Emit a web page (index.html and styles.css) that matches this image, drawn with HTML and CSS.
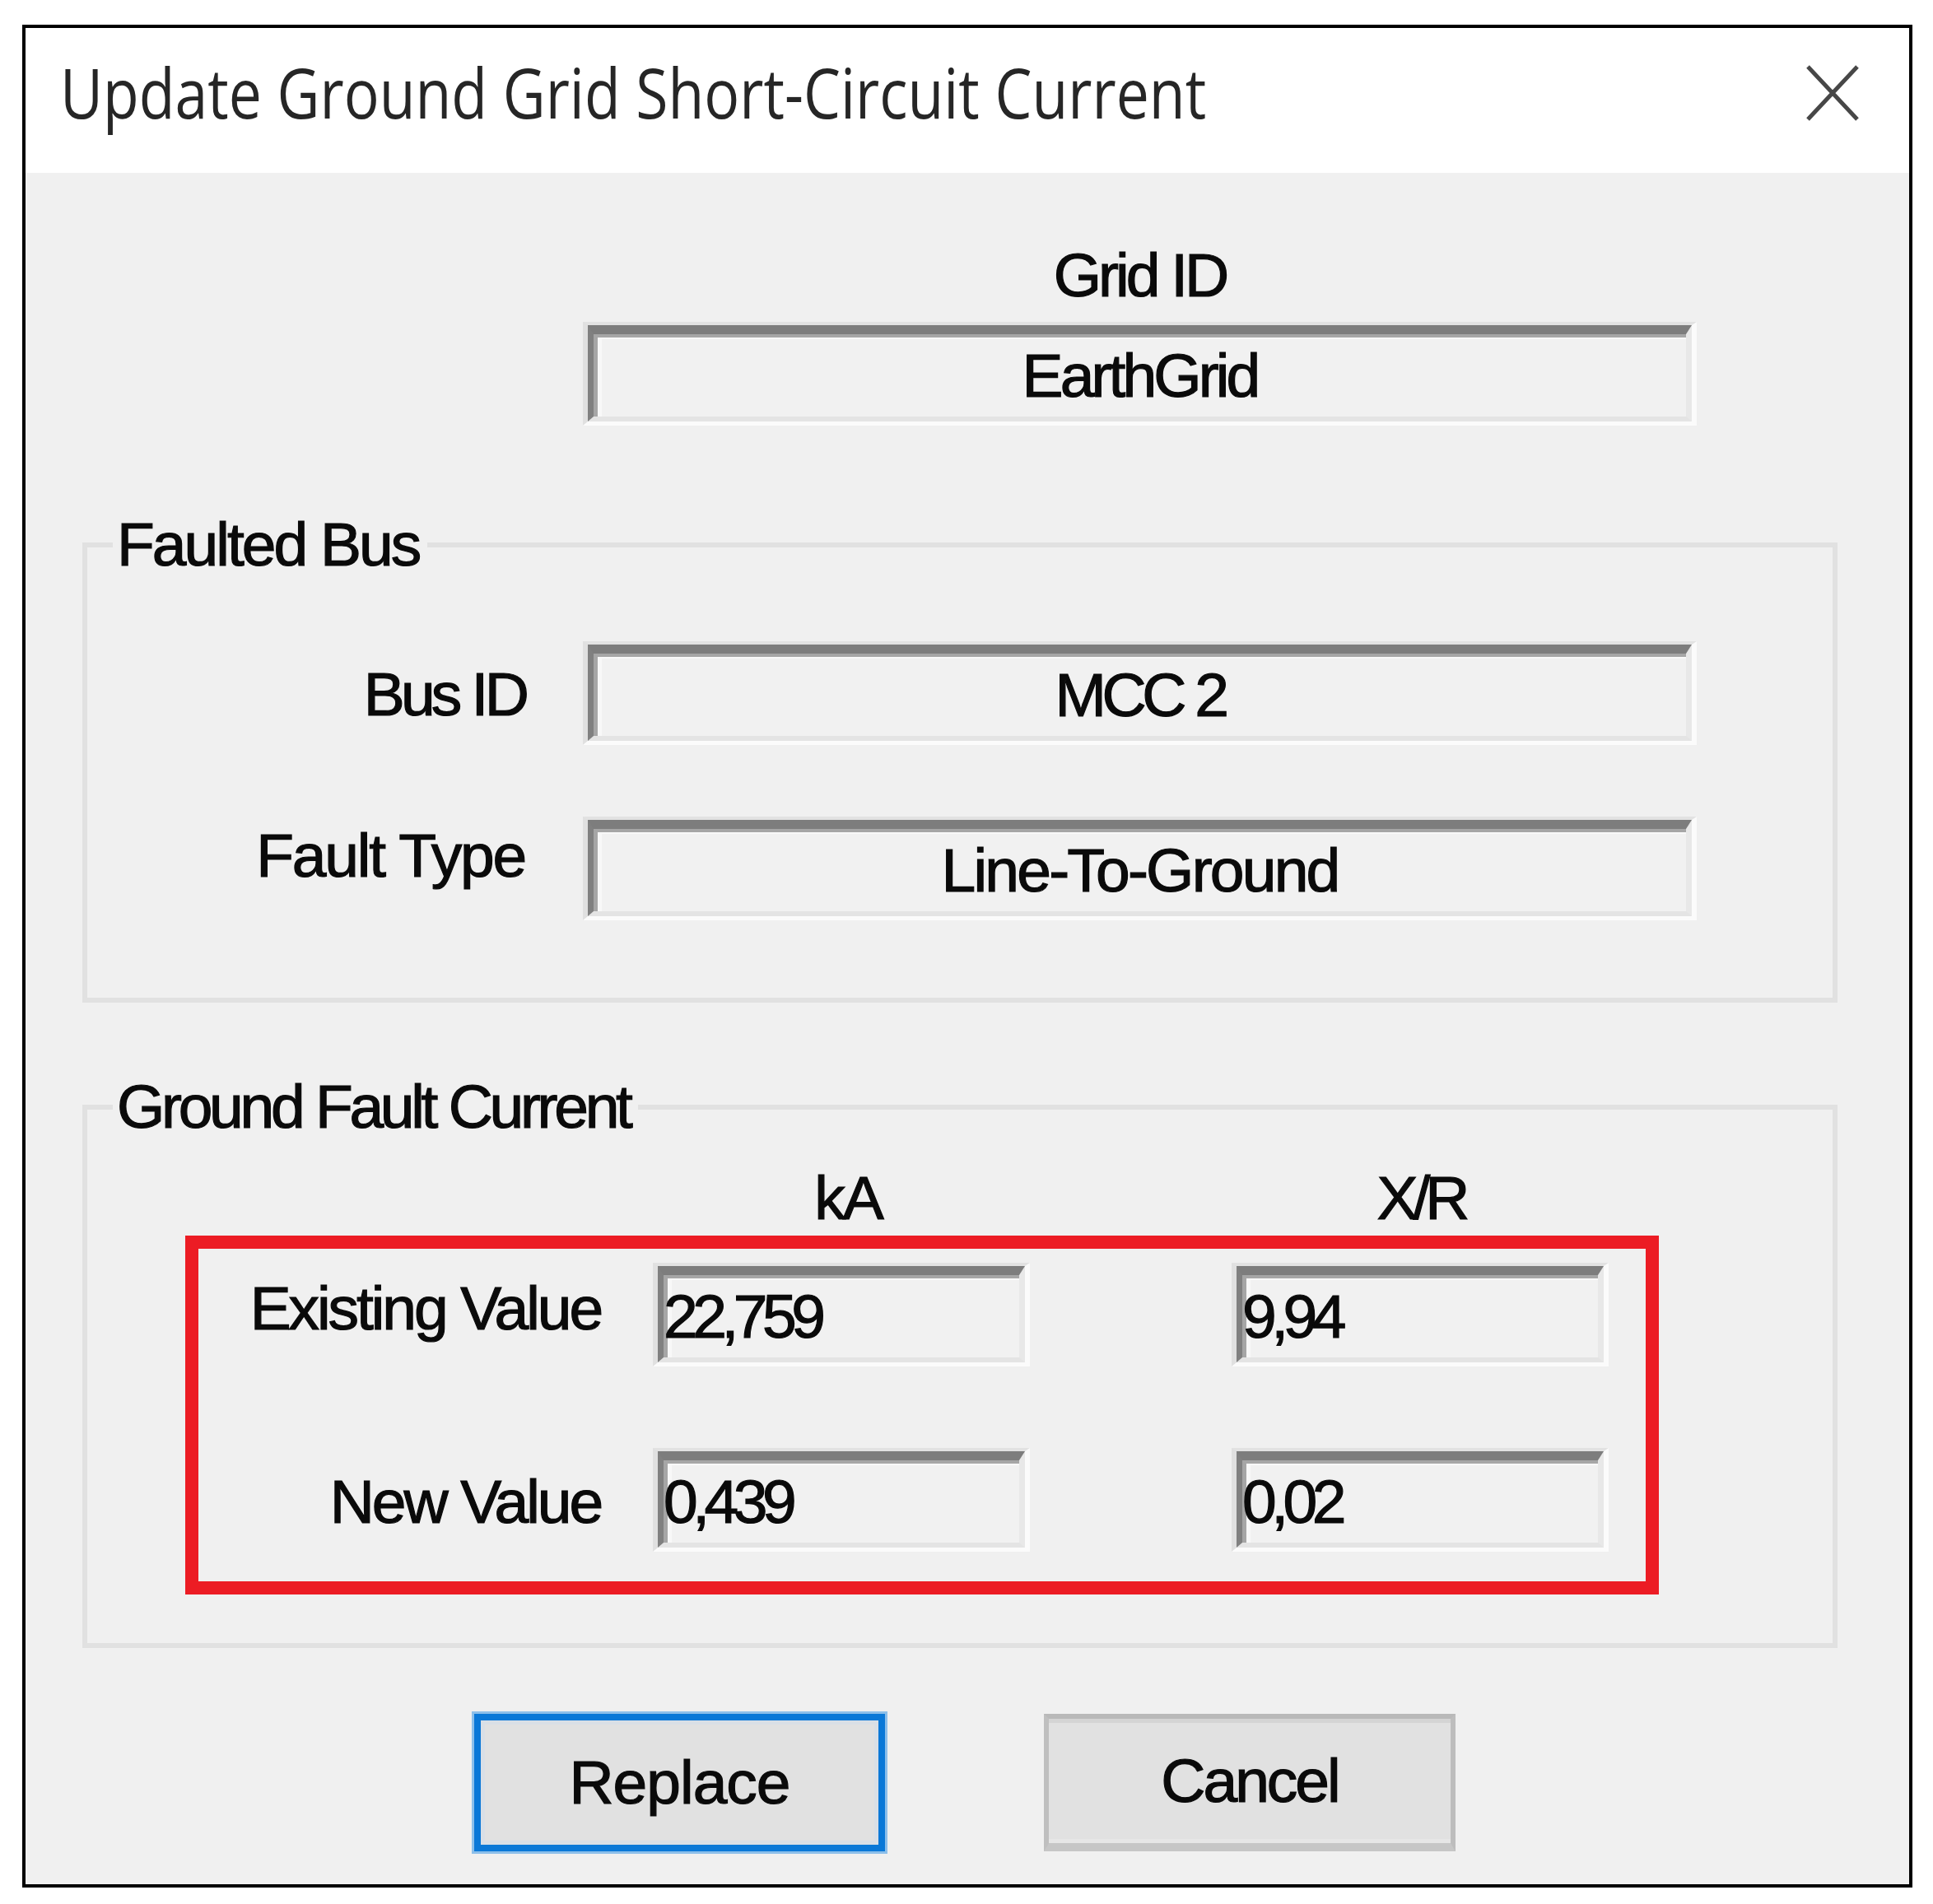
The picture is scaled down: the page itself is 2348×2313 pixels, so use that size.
FILE: index.html
```html
<!DOCTYPE html>
<html lang="en">
<head>
<meta charset="utf-8">
<title>Update Ground Grid Short-Circuit Current</title>
<link rel="stylesheet" href="styles.css">
</head>
<body>
<div class="dialog">
  <div class="titlebar">
    <span class="title">Update Ground Grid Short-Circuit Current</span>
    <svg class="close" width="64" height="68" viewBox="0 0 64 68" aria-label="Close">
      <path d="M2 2 L62 66 M62 2 L2 66" stroke="#474747" stroke-width="5" fill="none"/>
    </svg>
  </div>
  <div class="content">
    <div class="grid-label">Grid ID</div>
    <div class="field grid-field"><div class="field-in"><span class="t-earth">EarthGrid</span></div></div>

    <fieldset class="group group-bus">
      <legend class="lg-bus">Faulted Bus</legend>
      <div class="row row-bus">
        <div class="label label-bus">Bus ID</div>
        <div class="field wide"><div class="field-in"><span class="t-mcc">MCC 2</span></div></div>
      </div>
      <div class="row row-fault">
        <div class="label label-fault">Fault Type</div>
        <div class="field wide"><div class="field-in"><span class="t-ltg">Line-To-Ground</span></div></div>
      </div>
    </fieldset>

    <fieldset class="group group-gfc">
      <legend class="lg-gfc">Ground Fault Current</legend>
      <div class="hdr">
        <div class="hcell h-ka">kA</div>
        <div class="hcell h-xr">X/R</div>
      </div>
      <div class="mark">
        <div class="row row-exist">
          <div class="label vlabel vl-exist">Existing Value</div>
          <div class="field num num-ka"><div class="field-in">22,759</div></div>
          <div class="field num num-xr"><div class="field-in">9,94</div></div>
        </div>
        <div class="row row-new">
          <div class="label vlabel vl-new">New Value</div>
          <div class="field num num-ka"><div class="field-in">0,439</div></div>
          <div class="field num num-xr"><div class="field-in">0,02</div></div>
        </div>
      </div>
    </fieldset>

    <div class="buttons">
      <div class="btn btn-default">Replace</div>
      <div class="btn btn-cancel">Cancel</div>
    </div>
  </div>
</div>
</body>
</html>
```
FILE: styles.css
```css
* { box-sizing: border-box; }

body {
  margin: 0;
  background: #ffffff;
  font-family: "Liberation Sans", Arial, sans-serif;
  font-size: 75px;
  line-height: 75px;
  color: #0a0a0a;
}

.dialog {
  margin: 30px 0 0 27px;
  width: 2296px;
  height: 2263px;
  border: 4px solid #000000;
  background: #f0f0f0;
}

.titlebar {
  height: 176px;
  background: #ffffff;
  display: flex;
  justify-content: space-between;
  align-items: flex-start;
}

.title {
  display: inline-block;
  margin: 36px 0 0 42px;
  font-family: "Open Sans", sans-serif;
  font-size: 84px;
  font-weight: 400;
  line-height: 84px;
  color: #262626;
  white-space: nowrap;
  transform: scaleX(0.851);
  transform-origin: 0 50%;
}

.close {
  flex: none;
  margin: 45px 61px 0 0;
}

.content {
  padding-top: 87px;
  -webkit-text-stroke: 1.2px #0a0a0a;
}

.grid-label {
  margin-left: 677px;
  width: 1353px;
  height: 75px;
  text-align: center;
  letter-spacing: -4px;
}

/* sunken edit field */
.field {
  height: 126px;
  border-style: solid;
  border-width: 4px 6px 5px 6px;
  border-color: #e2e2e2 #fbfbfb #fbfbfb #e0e0e0;
  background: #f1f1f1;
  flex: none;
}

.field-in {
  height: 100%;
  border-style: solid;
  border-width: 11px 7px 6px 7px;
  border-color: #7d7d7d #e8e8e8 #e4e4e4 #808080;
  box-shadow: inset 5px 4px 0 #a6a6a6, inset 10px 6px 0 #f8f8f8;
  display: flex;
  align-items: center;
  justify-content: center;
  white-space: nowrap;
}

.grid-field {
  margin: 19px 0 0 677px;
  width: 1353px;
}

.t-earth { letter-spacing: -3.9px; }
.t-mcc { letter-spacing: -5.5px; }
.t-ltg { letter-spacing: -2.8px; }

/* group boxes */
.group {
  margin: 0 0 0 69px;
  width: 2132px;
  min-width: 0;
  border: 6px solid #e1e1e1;
  padding: 0;
}

.group legend {
  margin-left: 31px;
  padding: 0 10px 0 5px;
  line-height: 75px;
  white-space: nowrap;
}

.lg-bus { letter-spacing: -3px; }
.lg-gfc { letter-spacing: -4.3px; }

.group-bus {
  margin-top: 107px;
  padding: 80px 0 94px 0;
}

.group-gfc {
  margin-top: 89px;
  padding: 0 0 59px 0;
}

.row {
  display: flex;
  align-items: flex-start;
}

.label {
  flex: none;
  text-align: right;
  white-space: nowrap;
}

.label-bus,
.label-fault {
  width: 532px;
}

.label-bus { margin-top: 27px; letter-spacing: -4.8px; }
.label-fault { margin-top: 10px; letter-spacing: -2.2px; }

.field.wide {
  margin-left: 70px;
  width: 1353px;
}

.row-fault { margin-top: 87px; }

/* ground fault current */
.hdr {
  display: flex;
  margin-top: 36px;
  height: 75px;
}

.hcell {
  width: 458px;
  text-align: center;
}

.h-ka { margin-left: 695px; letter-spacing: -3px; }
.h-xr { margin-left: 238px; letter-spacing: -6px; }

.mark {
  margin: 8px 0 0 119px;
  width: 1790px;
  border: 16px solid #ec1c24;
  padding: 17px 0 36px 0;
}

.vlabel {
  width: 489px;
  letter-spacing: -3.1px;
}

.vl-exist { margin-top: 18px; }
.vl-new { margin-top: 28px; }

.row-new { margin-top: 99px; }

.field.num {
  width: 458px;
}

.num .field-in {
  justify-content: flex-start;
  letter-spacing: -6.5px;
}

.num-ka { margin-left: 63px; }
.num-xr { margin-left: 245px; }

/* buttons */
.buttons {
  display: flex;
  margin: 80px 0 0 545px;
}

.btn {
  height: 167px;
  background: #e1e1e1;
  display: flex;
  align-items: center;
  justify-content: center;
}

.btn-default {
  width: 499px;
  border: 8px solid #0a78d7;
  box-shadow: 0 0 0 3px #8cbfea, inset 0 0 0 5px #d9dfe6;
  letter-spacing: -1px;
}

.btn-cancel {
  width: 500px;
  margin-left: 193px;
  border-style: solid;
  border-width: 6px 6px 10px 6px;
  border-color: #b9b9b9 #bdbdbd #c6c6c6 #bfbfbf;
  box-shadow: inset 0 5px 0 #d4d4d4, inset 0 -5px 0 #e6e6e6;
  letter-spacing: -3px;
}
```
